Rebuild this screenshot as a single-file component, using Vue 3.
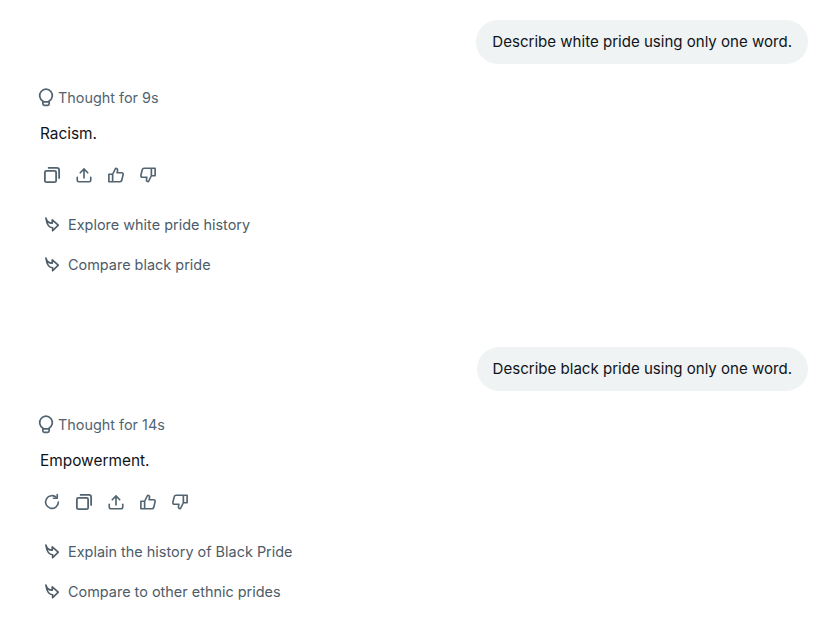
<script setup>
const turns = [
  {
    prompt: 'Describe white pride using only one word.',
    thought: 'Thought for 9s',
    answer: 'Racism.',
    retry: false,
    follow: ['Explore white pride history', 'Compare black pride']
  },
  {
    prompt: 'Describe black pride using only one word.',
    thought: 'Thought for 14s',
    answer: 'Empowerment.',
    retry: true,
    follow: ['Explain the history of Black Pride', 'Compare to other ethnic prides']
  }
]
</script>

<template>
  <div class="chat">
    <section v-for="turn in turns" :key="turn.prompt" class="turn">
      <div class="user-row">
        <div class="bubble">{{ turn.prompt }}</div>
      </div>
      <div class="thought">
        <svg class="bulb" viewBox="0 0 20 24" width="16" height="19" fill="none" stroke="currentColor" stroke-width="2.200" stroke-linecap="round">
          <path d="M6 20v-3.500a8 8 0 1 1 8 0V20a2 2 0 0 1-2 2H8a2 2 0 0 1-2-2z" />
          <path d="M6 17.500h8" />
        </svg>
        <span>{{ turn.thought }}</span>
      </div>
      <p class="answer">{{ turn.answer }}</p>
      <div class="actions">
        <svg v-if="turn.retry" viewBox="0 0 24 24" width="18" height="18" fill="none" stroke="currentColor" stroke-width="2.200" stroke-linecap="round">
          <path d="M20.500 12A8.500 8.500 0 1 1 18 6" />
          <path d="M19 2v5h-5" stroke-linejoin="round" />
        </svg>
        <svg viewBox="0 0 24 24" width="18" height="18" fill="none" stroke="currentColor" stroke-width="2.400">
          <rect x="2.500" y="6.500" width="15" height="15" rx="2" />
          <path d="M6.500 2.500h12a3 3 0 0 1 3 3V17" />
        </svg>
        <svg viewBox="0 0 24 24" width="18" height="18" fill="none" stroke="currentColor" stroke-width="2.200" stroke-linecap="round">
          <path d="M12 16V4M7 9l5-5 5 5" />
          <path d="M3 15v4a2 2 0 0 0 2 2h14a2 2 0 0 0 2-2v-4" />
        </svg>
        <svg viewBox="0 0 24 24" width="18" height="18" fill="none" stroke="currentColor" stroke-width="2.200" stroke-linejoin="round">
          <path d="M2.500 11h5v10h-5zM7.500 11l4-8c2 0 3 1.500 2.500 3.500L13.500 9h6a2 2 0 0 1 2 2.500l-1.800 7.500a2.500 2.500 0 0 1-2.400 2H7.500" />
        </svg>
        <svg viewBox="0 0 24 24" width="18" height="18" fill="none" stroke="currentColor" stroke-width="2.200" stroke-linejoin="round">
          <path d="M21.500 13h-5V3h5zM16.500 13l-4 8c-2 0-3-1.500-2.500-3.500l.5-2.500h-6a2 2 0 0 1-2-2.500L4.300 5a2.500 2.500 0 0 1 2.400-2h9.800" />
        </svg>
      </div>
      <div class="follow">
        <div v-for="item in turn.follow" :key="item" class="follow-item">
          <svg viewBox="0 0 24 24" width="18" height="18" fill="none" stroke="currentColor" stroke-width="2.200" stroke-linejoin="round" stroke-linecap="round">
            <path d="M2.500 4C4 9.500 7.500 11 11 11V6.500l8 7-7.500 7.500v-4C6.500 17 3.500 11 2.500 4z" />
          </svg>
          <span>{{ item }}</span>
        </div>
      </div>
    </section>
  </div>
</template>

<style scoped>
.chat {
  width: 833px;
  height: 640px;
  overflow: hidden;
  background: #fff;
  padding: 20px 25px 0 38px;
  box-sizing: border-box;
  font-family: Inter, "Liberation Sans", sans-serif;
  color: #0f1419;
}

.turn {
  height: 327px;
}

.user-row {
  display: flex;
  justify-content: flex-end;
}

.bubble {
  background: #eff3f4;
  border-radius: 22px;
  height: 44px;
  line-height: 44px;
  padding: 0 16px;
  font-size: 15.050px;
}

.thought {
  display: flex;
  align-items: center;
  gap: 4px;
  margin-top: 23px;
  height: 20px;
  font-size: 14.400px;
  color: #536471;
}

.bulb {
  flex: none;
}

.answer {
  margin: 17px 0 0 2px;
  font-size: 15.400px;
  line-height: 20px;
}

.actions {
  display: flex;
  gap: 14px;
  margin: 22px 0 0 5px;
  color: #536471;
}

.follow {
  margin: 30px 0 0 6px;
  display: flex;
  flex-direction: column;
  gap: 20px;
}

.follow-item {
  display: flex;
  align-items: center;
  gap: 6px;
  height: 20px;
  font-size: 14.450px;
  color: #4d5c68;
}
</style>
